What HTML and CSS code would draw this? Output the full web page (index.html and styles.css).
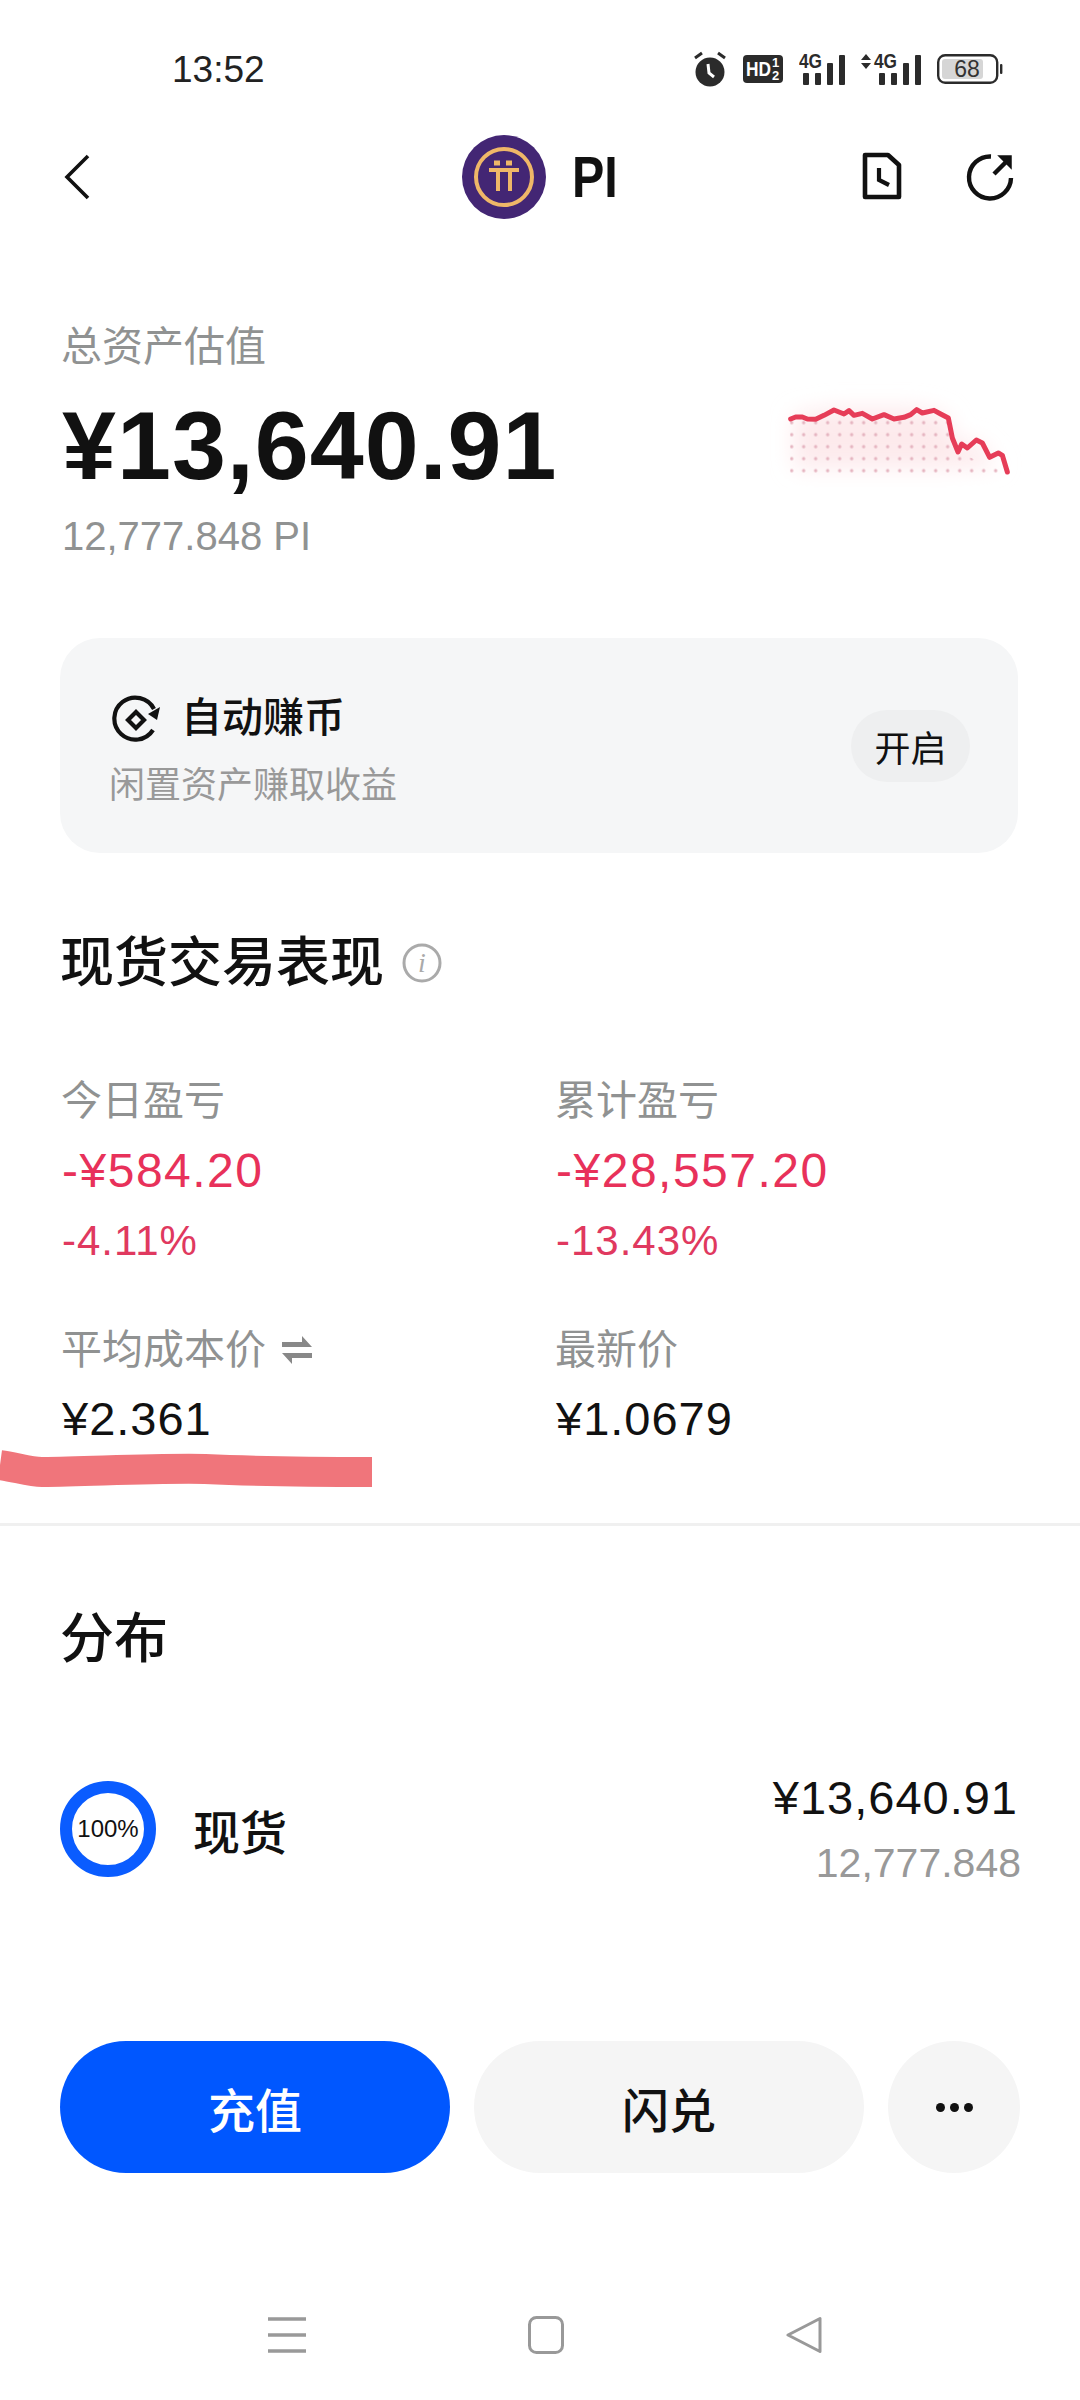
FILE: index.html
```html
<!DOCTYPE html>
<html lang="zh">
<head>
    <meta charset="UTF-8">
    <meta name="viewport" content="width=device-width, initial-scale=1.0">
    <title>PI</title>
    <link rel="stylesheet" href="styles.css">
</head>
<body>
    <div class="page">
        <div class="status-bar">
            <span class="status-time">13:52</span>
            <div class="status-icons">
                <svg width="34" height="36" viewBox="0 0 34 36">
                    <circle cx="17" cy="21" r="14.5" fill="#2b2b2b"/>
                    <path d="M2 7l7-5M32 7l-7-5" stroke="#2b2b2b" stroke-width="3" fill="none"/>
                    <path d="M15 13l1 9 5 4" stroke="#fff" stroke-width="3" fill="none"/>
                </svg>
                <svg width="40" height="28" viewBox="0 0 40 28">
                    <rect width="40" height="28" rx="4" fill="#2b2b2b"/>
                    <text x="3" y="21" class="hd-text" textLength="25" lengthAdjust="spacingAndGlyphs">HD</text>
                    <text x="29" y="12" class="hd-frac">1</text>
                    <text x="29" y="25" class="hd-frac">2</text>
                </svg>
                <svg class="signal" width="46" height="40" viewBox="0 -8 46 40">
                    <text x="0" y="15" class="sig-text" textLength="23" lengthAdjust="spacingAndGlyphs">4G</text>
                    <rect x="4" y="20" width="6" height="12" rx="1" fill="#2b2b2b"/>
                    <rect x="16" y="20" width="6" height="12" rx="1" fill="#2b2b2b"/>
                    <rect x="28" y="10" width="6" height="22" rx="1" fill="#2b2b2b"/>
                    <rect x="40" y="2" width="6" height="30" rx="1" fill="#2b2b2b"/>
                </svg>
                <svg class="signal" width="60" height="40" viewBox="0 -8 60 40">
                    <path d="M0 7l5-6 5 6zM0 10l5 6 5-6z" fill="#2b2b2b"/>
                    <text x="13" y="15" class="sig-text" textLength="23" lengthAdjust="spacingAndGlyphs">4G</text>
                    <rect x="18" y="20" width="6" height="12" rx="1" fill="#2b2b2b"/>
                    <rect x="30" y="20" width="6" height="12" rx="1" fill="#2b2b2b"/>
                    <rect x="42" y="10" width="6" height="22" rx="1" fill="#2b2b2b"/>
                    <rect x="54" y="2" width="6" height="30" rx="1" fill="#2b2b2b"/>
                </svg>
                <svg width="66" height="30" viewBox="0 0 66 30">
                    <rect x="1.2" y="1.2" width="59" height="27.6" rx="7" fill="#fff" stroke="#2b2b2b" stroke-width="2.4"/>
                    <rect x="5" y="5" width="41" height="20" rx="3" fill="#d6d6d6"/>
                    <rect x="63" y="10" width="2.4" height="10" rx="1" fill="#2b2b2b"/>
                    <text x="30" y="23" class="bat-text">68</text>
                </svg>
            </div>
        </div>

        <header class="nav">
            <svg width="26" height="46" viewBox="0 0 26 46">
                <path d="M24 2L3 23l21 21" fill="none" stroke="#111" stroke-width="3.6"/>
            </svg>
            <div class="nav-title">
                <svg width="84" height="84" viewBox="0 0 84 84">
                    <circle cx="42" cy="42" r="42" fill="#432674"/>
                    <circle cx="42" cy="42" r="28" fill="none" stroke="#efb768" stroke-width="4"/>
                    <g fill="none" stroke="#efb768" stroke-width="4">
                        <path d="M27 35h30"/>
                        <path d="M36 33v23M48 33v23"/>
                        <path d="M32 28h6M44 28h6" stroke-width="5"/>
                    </g>
                </svg>
                <span class="coin-name">PI</span>
            </div>
            <div class="nav-actions">
                <svg width="44" height="50" viewBox="0 0 44 50">
                    <path d="M5 3h23l11 10v32H5z" fill="none" stroke="#111" stroke-width="4.6" stroke-linejoin="round"/>
                    <path d="M19 16v12l10 5" fill="none" stroke="#111" stroke-width="4.2"/>
                </svg>
                <svg width="48" height="48" viewBox="0 0 48 48">
                    <path d="M25 3.5A21 21 0 1 0 45 25" fill="none" stroke="#111" stroke-width="4.4"/>
                    <path d="M28 21L41 8" fill="none" stroke="#111" stroke-width="4.4"/>
                    <path d="M33 3h12v12z" fill="#111" stroke="#111" stroke-width="1.5"/>
                </svg>
            </div>
        </header>

        <section class="summary">
            <div>
                <div class="summary-label">总资产估值</div>
                <div class="summary-total">¥13,640.91</div>
                <div class="summary-sub">12,777.848 PI</div>
            </div>
            <svg class="spark" width="300" height="110" viewBox="0 0 900 330">
                <defs>
                    <filter id="blur" x="-30%" y="-60%" width="160%" height="220%">
                        <feGaussianBlur stdDeviation="32"/>
                    </filter>
                    <pattern id="dots" x="140" y="116" width="36" height="36" patternUnits="userSpaceOnUse">
                        <circle cx="18" cy="18" r="5" fill="#e5b4c0"/>
                    </pattern>
                    <clipPath id="below">
                        <path d="M152 123L530 100L628 120L660 225L805 285V300H152z"/>
                    </clipPath>
                </defs>
                <path d="M165 110L285 90L533 90L620 110L660 205L712 186L752 238L790 262L640 270H165z" fill="#fdeaec" filter="url(#blur)"/>
                <rect x="150" y="120" width="640" height="170" fill="url(#dots)" clip-path="url(#below)"/>
                <polyline fill="none" stroke="#e63d58" stroke-width="15" stroke-linejoin="round" stroke-linecap="round" points="155,123 170,117 190,117 205,123 230,124 255,112 285,96 315,108 330,98 345,112 370,106 400,123 435,110 465,123 495,118 515,110 533,95 550,105 585,97 605,108 628,120 640,180 657,222 668,198 685,210 712,186 730,195 752,238 778,225 790,232 805,282"/>
            </svg>
        </section>

        <section class="earn-card">
            <div class="earn-text">
                <div class="earn-title">
                    <svg width="52" height="48" viewBox="0 0 52 48">
                        <path d="M43 36A21 21 0 1 1 44 15" fill="none" stroke="#111" stroke-width="4.2"/>
                        <path d="M38 20l12-7-3 13z" fill="#111"/>
                        <path d="M26 18l8 8-8 8-8-8z" fill="none" stroke="#111" stroke-width="4.2"/>
                    </svg>
                    <span>自动赚币</span>
                </div>
                <div class="earn-sub">闲置资产赚取收益</div>
            </div>
            <div class="earn-btn">开启</div>
        </section>

        <section class="perf">
            <h2 class="section-title">现货交易表现
                <svg width="40" height="40" viewBox="0 0 40 40">
                    <circle cx="20" cy="20" r="18" fill="none" stroke="#aaa" stroke-width="3"/>
                    <text x="20" y="29" class="info-i">i</text>
                </svg>
            </h2>
            <div class="stats">
                <div class="stat">
                    <div class="stat-label">今日盈亏</div>
                    <div class="stat-value red">-¥584.20</div>
                    <div class="stat-pct">-4.11%</div>
                </div>
                <div class="stat">
                    <div class="stat-label">累计盈亏</div>
                    <div class="stat-value red">-¥28,557.20</div>
                    <div class="stat-pct">-13.43%</div>
                </div>
                <div class="stat">
                    <div class="stat-label">平均成本价
                        <svg width="30" height="28" viewBox="0 0 30 28">
                            <path d="M0 6H20V0L30 11H0zM30 22H10V28L0 17H30z" fill="#888"/>
                        </svg>
                    </div>
                    <div class="stat-price">¥2.361</div>
                </div>
                <div class="stat">
                    <div class="stat-label">最新价</div>
                    <div class="stat-price">¥1.0679</div>
                </div>
            </div>
            <svg class="scribble" width="374" height="60" viewBox="0 0 374 60">
                <path d="M0 24C15 26 30 31 42 31C100 30 160 27 205 28C270 31 320 31 372 31" fill="none" stroke="#f0757b" stroke-width="30"/>
            </svg>
        </section>

        <section class="distribution">
            <h2 class="section-title">分布</h2>
            <div class="dist-row">
                <div class="donut">100%</div>
                <div class="dist-name">现货</div>
                <div class="dist-amount">
                    <div class="dist-value">¥13,640.91</div>
                    <div class="dist-qty">12,777.848</div>
                </div>
            </div>
        </section>

        <div class="actions">
            <div class="btn btn-primary">充值</div>
            <div class="btn btn-soft">闪兑</div>
            <div class="btn btn-more">
                <i></i><i></i><i></i>
            </div>
        </div>

        <nav class="sys-nav">
            <svg width="38" height="38" viewBox="0 0 38 38">
                <path d="M0 3h38M0 19h38M0 35h38" stroke="#999" stroke-width="3.4"/>
            </svg>
            <svg width="36" height="38" viewBox="0 0 36 38">
                <rect x="1.5" y="1.5" width="33" height="35" rx="7" fill="none" stroke="#999" stroke-width="3"/>
            </svg>
            <svg width="36" height="38" viewBox="0 0 36 38">
                <path d="M34 2.5v33L2 19z" fill="none" stroke="#999" stroke-width="3" stroke-linejoin="round"/>
            </svg>
        </nav>
    </div>
</body>
</html>
```

FILE: styles.css
```css
* {
    box-sizing: border-box;
}
body {
    margin: 0;
    background: #ffffff;
    color: #111111;
    font-family: "Liberation Sans", "Noto Sans CJK SC", sans-serif;
}
.page {
    width: 1080px;
    height: 2400px;
    overflow: hidden;
    display: flex;
    flex-direction: column;
}
.status-bar {
    height: 138px;
    display: flex;
    align-items: center;
    padding: 0 77px 0 172px;
}
.status-time {
    font-size: 37px;
    color: #222222;
    padding-top: 2px;
}
.status-icons {
    margin-left: auto;
    display: flex;
    align-items: center;
    gap: 16px;
}
.signal {
    margin-top: -8px;
}
.hd-text {
    font: bold 21px "Liberation Sans", sans-serif;
    fill: #ffffff;
}
.hd-frac {
    font: bold 13px "Liberation Sans", sans-serif;
    fill: #ffffff;
}
.sig-text {
    font: bold 20px "Liberation Sans", sans-serif;
    fill: #2b2b2b;
}
.bat-text {
    font: 23px "Liberation Sans", sans-serif;
    fill: #333333;
    text-anchor: middle;
}
.nav {
    height: 78px;
    display: flex;
    align-items: center;
    justify-content: space-between;
    padding: 0 66px 0 64px;
    position: relative;
}
.nav-title {
    position: absolute;
    left: 462px;
    top: -3px;
    display: flex;
    align-items: center;
    gap: 26px;
}
.coin-name {
    font-size: 57px;
    font-weight: bold;
    transform: scaleX(0.85);
    transform-origin: left center;
}
.nav-actions {
    display: flex;
    align-items: center;
    gap: 62px;
}
.summary {
    padding: 0 62px;
    margin-top: 104px;
    display: flex;
    justify-content: space-between;
}
.summary-label {
    font-size: 41px;
    line-height: 54px;
    color: #909292;
    margin-left: -1px;
}
.summary-total {
    font-size: 97px;
    font-weight: bold;
    line-height: 110px;
    margin-top: 17px;
    letter-spacing: 1px;
}
.summary-sub {
    font-size: 40px;
    line-height: 50px;
    color: #909292;
    margin-top: 10px;
}
.spark {
    margin: 58px -21px 0 0;
}
.earn-card {
    margin: 77px 62px 0 60px;
    height: 215px;
    border-radius: 40px;
    background: #f5f6f7;
    display: flex;
    align-items: center;
    justify-content: space-between;
    padding: 0 48px 0 50px;
}
.earn-text {
    padding-top: 8px;
}
.earn-title {
    display: flex;
    align-items: center;
    gap: 19px;
    font-size: 41px;
    font-weight: 500;
    line-height: 60px;
}
.earn-sub {
    font-size: 36px;
    line-height: 50px;
    color: #999999;
    margin-top: 13px;
    margin-left: -1px;
}
.earn-btn {
    width: 119px;
    height: 72px;
    border-radius: 36px;
    background: #eeeff0;
    display: flex;
    align-items: center;
    justify-content: center;
    font-size: 36px;
}
.perf {
    padding: 0 62px;
    margin-top: 74px;
    position: relative;
    height: 599px;
    border-bottom: 3px solid #f0f0f0;
}
.section-title {
    margin: 0 0 0 -2px;
    font-size: 54px;
    font-weight: 500;
    line-height: 72px;
    display: flex;
    align-items: center;
    gap: 18px;
}
.info-i {
    font: italic 28px "Liberation Serif", serif;
    fill: #aaaaaa;
    text-anchor: middle;
}
.stats {
    display: grid;
    grid-template-columns: 494px 1fr;
    margin-top: 75px;
    row-gap: 57px;
}
.stat-label {
    font-size: 41px;
    line-height: 54px;
    color: #909292;
    margin-left: -1px;
    display: flex;
    align-items: center;
    gap: 16px;
}
.stat-value {
    font-size: 48px;
    line-height: 60px;
    margin-top: 13px;
    letter-spacing: 1.5px;
}
.stat-pct {
    font-size: 42px;
    line-height: 50px;
    margin-top: 15px;
    letter-spacing: 1px;
    color: #e0395f;
}
.red {
    color: #e8315a;
}
.stat-price {
    font-size: 47px;
    line-height: 56px;
    margin-top: 14px;
    letter-spacing: 1px;
}
.scribble {
    position: absolute;
    left: 0;
    top: 514px;
}
.distribution {
    padding: 0 62px;
    margin-top: 77px;
}
.dist-row {
    display: flex;
    align-items: center;
    margin-top: 95px;
}
.donut {
    width: 96px;
    height: 96px;
    margin-left: -2px;
    border: 12px solid #0a5cff;
    border-radius: 50%;
    display: flex;
    align-items: center;
    justify-content: center;
    font-size: 24px;
    white-space: nowrap;
}
.dist-name {
    font-size: 47px;
    font-weight: 500;
    margin-left: 37px;
}
.dist-amount {
    margin-left: auto;
    text-align: right;
}
.dist-value {
    font-size: 47px;
    line-height: 56px;
    letter-spacing: 1px;
}
.dist-qty {
    font-size: 41px;
    line-height: 50px;
    margin: 12px -3px 0 0;
    color: #999999;
}
.actions {
    margin-top: 153px;
    padding: 0 60px;
    display: flex;
    gap: 24px;
}
.btn {
    height: 132px;
    border-radius: 66px;
    display: flex;
    align-items: center;
    justify-content: center;
    gap: 5px;
    font-size: 47px;
    font-weight: 500;
}
.btn-primary {
    width: 390px;
    background: #0057ff;
    color: #ffffff;
}
.btn-soft {
    width: 390px;
    background: #f5f5f5;
}
.btn-more {
    width: 132px;
    background: #f5f5f5;
}
.btn-more i {
    width: 9px;
    height: 9px;
    border-radius: 50%;
    background: #111111;
}
.sys-nav {
    margin-top: 143px;
    display: flex;
    justify-content: center;
    gap: 222px;
    padding-left: 10px;
}
```
